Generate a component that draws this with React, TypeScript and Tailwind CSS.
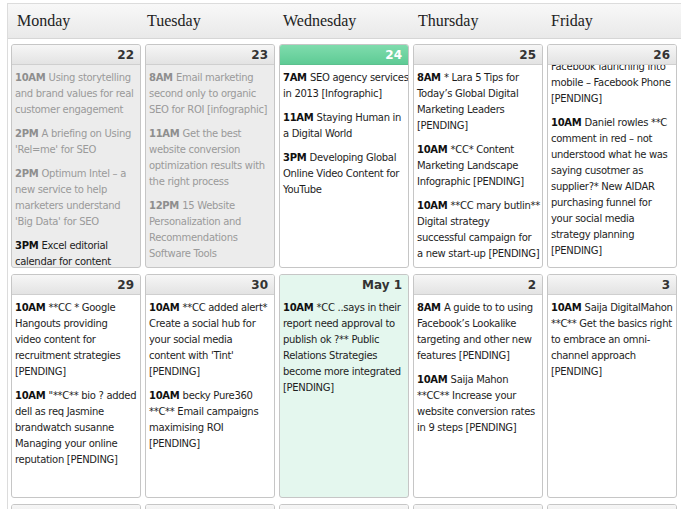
type Ev = { time?: string; lines: string[]; dark?: boolean };

type Day = {
  label: string;
  events: Ev[];
  kind?: "past" | "today" | "highlight";
  shift?: boolean;
};

const days = [
  { name: "Monday", pad: "pl-[6px]" },
  { name: "Tuesday", pad: "pl-[2px]" },
  { name: "Wednesday", pad: "pl-[4px]" },
  { name: "Thursday", pad: "pl-[5px]" },
  { name: "Friday", pad: "pl-[4px]" },
];

// lines are kept as the calendar wraps them
const weeks: Day[][] = [
  [
    {
      label: "22",
      kind: "past",
      events: [
        { time: "10AM", lines: ["Using storytelling", "and brand values for real", "customer engagement"] },
        { time: "2PM", lines: ["A briefing on Using", "'Rel=me' for SEO"] },
        { time: "2PM", lines: ["Optimum Intel – a", "new service to help", "marketers understand", "'Big Data' for SEO"] },
        { time: "3PM", lines: ["Excel editorial", "calendar for content", "marketing [PENDING]"], dark: true },
      ],
    },
    {
      label: "23",
      kind: "past",
      events: [
        { time: "8AM", lines: ["Email marketing", "second only to organic", "SEO for ROI [infographic]"] },
        { time: "11AM", lines: ["Get the best", "website conversion", "optimization results with", "the right process"] },
        { time: "12PM", lines: ["15 Website", "Personalization and", "Recommendations", "Software Tools"] },
      ],
    },
    {
      label: "24",
      kind: "today",
      events: [
        { time: "7AM", lines: ["SEO agency services", "in 2013 [Infographic]"] },
        { time: "11AM", lines: ["Staying Human in", "a Digital World"] },
        { time: "3PM", lines: ["Developing Global", "Online Video Content for", "YouTube"] },
      ],
    },
    {
      label: "25",
      events: [
        { time: "8AM", lines: ["* Lara 5 Tips for", "Today’s Global Digital", "Marketing Leaders", "[PENDING]"] },
        { time: "10AM", lines: ["*CC* Content", "Marketing Landscape", "Infographic [PENDING]"] },
        { time: "10AM", lines: ["**CC mary butlin**", "Digital strategy", "successful campaign for", "a new start-up [PENDING]"] },
      ],
    },
    {
      label: "26",
      shift: true,
      events: [
        { lines: ["Facebook launching into", "mobile – Facebook Phone", "[PENDING]"] },
        {
          time: "10AM",
          lines: [
            "Daniel rowles **C",
            "comment in red – not",
            "understood what he was",
            "saying cusotmer as",
            "supplier?* New AIDAR",
            "purchasing funnel for",
            "your social media",
            "strategy planning",
            "[PENDING]",
          ],
        },
      ],
    },
  ],
  [
    {
      label: "29",
      events: [
        { time: "10AM", lines: ["**CC * Google", "Hangouts providing", "video content for", "recruitment strategies", "[PENDING]"] },
        { time: "10AM", lines: ["\"**C** bio ? added", "dell as req Jasmine", "brandwatch susanne", "Managing your online", "reputation [PENDING]"] },
      ],
    },
    {
      label: "30",
      events: [
        { time: "10AM", lines: ["**CC added alert*", "Create a social hub for", "your social media", "content with 'Tint'", "[PENDING]"] },
        { time: "10AM", lines: ["becky Pure360", "**C** Email campaigns", "maximising ROI", "[PENDING]"] },
      ],
    },
    {
      label: "May 1",
      kind: "highlight",
      events: [
        {
          time: "10AM",
          lines: [
            "*CC ..says in their",
            "report need approval to",
            "publish ok ?** Public",
            "Relations Strategies",
            "become more integrated",
            "[PENDING]",
          ],
        },
      ],
    },
    {
      label: "2",
      events: [
        { time: "8AM", lines: ["A guide to to using", "Facebook’s Lookalike", "targeting and other new", "features [PENDING]"] },
        { time: "10AM", lines: ["Saija Mahon", "**CC** Increase your", "website conversion rates", "in 9 steps [PENDING]"] },
      ],
    },
    {
      label: "3",
      events: [
        { time: "10AM", lines: ["Saija DigitalMahon", "**C** Get the basics right", "to embrace an omni-", "channel approach", "[PENDING]"] },
      ],
    },
  ],
  [
    { label: "6", events: [] },
    { label: "7", events: [] },
    { label: "8", events: [] },
    { label: "9", events: [] },
    { label: "10", events: [] },
  ],
];

function Cell({ day }: { day: Day }) {
  const past = day.kind === "past";
  const today = day.kind === "today";
  const hl = day.kind === "highlight";

  const cellBg = past ? "bg-[#ececec]" : hl ? "bg-[#e4f7ee]" : "bg-white";
  const headBg = today
    ? "bg-gradient-to-b from-[#7fdcad] to-[#5ecb95] text-white border-[#5cc08e]"
    : hl
      ? "bg-[#e4f7ee] text-[#333] border-transparent"
      : "bg-gradient-to-b from-[#f6f6f6] to-[#e3e3e3] text-[#333] border-[#cfcfcf]";

  return (
    <div
      className={`h-[224px] flex flex-col border border-[#c6c6c6] rounded-[3px] overflow-hidden ${cellBg}`}
    >
      <div
        className={`h-[20px] shrink-0 border-b text-right pr-[6px] text-[12px] font-bold leading-[20px] ${headBg}`}
      >
        {day.label}
      </div>
      <div className="flex-1 overflow-hidden">
        <div
          className={`px-[3px] pt-[5px] flex flex-col gap-[8px] text-[10px] leading-[16px] tracking-[-0.3px] whitespace-nowrap ${day.shift ? "-mt-[11px]" : ""}`}
        >
          {day.events.map((ev, i) => {
            const grey = past && !ev.dark;
            return (
              <div key={i} className={grey ? "text-[#9a9a9a]" : "text-[#1e1e1e]"}>
                {ev.lines.map((line, j) => (
                  <div key={j}>
                    {j === 0 && ev.time && (
                      <b className={grey ? "text-[#8e8e8e]" : "text-[#111]"}>{ev.time} </b>
                    )}
                    {line}
                  </div>
                ))}
              </div>
            );
          })}
        </div>
      </div>
    </div>
  );
}

export default function App() {
  return (
    <div className="w-[681px] h-[509px] overflow-hidden bg-white">
      <div
        className="ml-[7px] mt-[3px] border-l border-t border-[#dcdcdc]"
        style={{ fontFamily: '"DejaVu Sans", "Lucida Grande", sans-serif' }}
      >
        {/* weekday header */}
        <div className="h-[35px] pl-[3px] grid grid-cols-[repeat(5,130px)] gap-x-[4px] bg-gradient-to-b from-[#f8f8f8] to-[#e9e9e9] border-b border-[#d6d6d6]">
          {days.map((d) => (
            <div
              key={d.name}
              className={`${d.pad} pt-[7px] text-[16px] text-[#222] leading-[20px]`}
              style={{ fontFamily: '"Liberation Serif", Georgia, serif' }}
            >
              {d.name}
            </div>
          ))}
        </div>

        {/* weeks */}
        <div className="pl-[3px] pt-[5px] grid grid-cols-[repeat(5,130px)] gap-x-[4px] gap-y-[6px]">
          {weeks.flat().map((day, i) => (
            <Cell key={i} day={day} />
          ))}
        </div>
      </div>
    </div>
  );
}
